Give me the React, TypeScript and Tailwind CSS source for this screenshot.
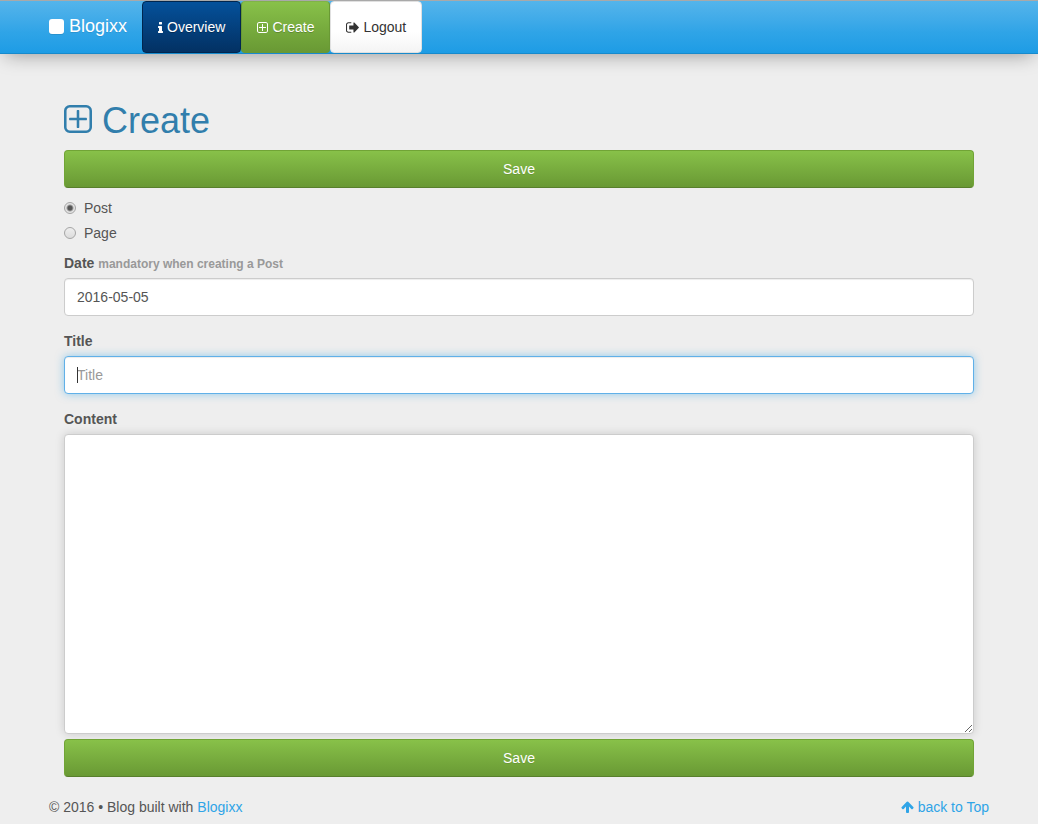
import { useState } from "react"
import type { ReactNode } from "react"
import { clsx } from "clsx"

type IconName = "info" | "plus" | "signout" | "arrowUp"

const ICONS: Record<IconName, { viewBox: string; d: string }> = {
  info: {
    viewBox: "576 128 640 1408",
    d: "M1216 1344v128q0 26-19 45t-45 19h-512q-26 0-45-19t-19-45v-128q0-26 19-45t45-19h64v-384h-64q-26 0-45-19t-19-45v-128q0-26 19-45t45-19h384q26 0 45 19t19 45v576h64q26 0 45 19t19 45zm-128-1152v192q0 26-19 45t-45 19h-256q-26 0-45-19t-19-45v-192q0-26 19-45t45-19h256q26 0 45 19t19 45z",
  },
  plus: {
    viewBox: "192 128 1408 1408",
    d: "M1344 800v64q0 14-9 23t-23 9h-352v352q0 14-9 23t-23 9h-64q-14 0-23-9t-9-23v-352h-352q-14 0-23-9t-9-23v-64q0-14 9-23t23-9h352v-352q0-14 9-23t23-9h64q14 0 23 9t9 23v352h352q14 0 23 9t9 23zm128 448v-832q0-66-47-113t-113-47h-832q-66 0-113 47t-47 113v832q0 66 47 113t113 47h832q66 0 113-47t47-113zm128-832v832q0 119-84.5 203.5t-203.5 84.5h-832q-119 0-203.5-84.5t-84.5-203.5v-832q0-119 84.5-203.5t203.5-84.5h832q119 0 203.5 84.5t84.5 203.5z",
  },
  signout: {
    viewBox: "64 256 1568 1280",
    d: "M704 1440q0 4 1 20t.5 26.5-3 23.5-10 19.5-20.5 6.5h-320q-119 0-203.5-84.5t-84.5-203.5v-704q0-119 84.5-203.5t203.5-84.5h320q13 0 22.5 9.5t9.5 22.5q0 4 1 20t.5 26.5-3 23.5-10 19.5-20.5 6.5h-320q-66 0-113 47t-47 113v704q0 66 47 113t113 47h312l11.5 1 11.5 3 8 5.5 7 9 2 13.5zm928-544q0 26-19 45l-544 544q-19 19-45 19t-45-19-19-45v-288h-448q-26 0-45-19t-19-45v-384q0-26 19-45t45-19h448v-288q0-26 19-45t45-19 45 19l544 544q19 19 19 45z",
  },
  arrowUp: {
    viewBox: "117 128 1558 1536",
    d: "M1675 971q0 51-37 90l-75 75q-38 38-91 38-54 0-90-38l-294-293v704q0 52-37.5 84.5t-90.5 32.5h-128q-53 0-90.5-32.5t-37.5-84.5v-704l-294 293q-36 38-90 38t-90-38l-75-75q-38-38-38-90 0-53 38-91l651-651q35-37 90-37 54 0 91 37l651 651q37 39 37 91z",
  },
}

function Icon({ name, className }: { name: IconName; className: string }) {
  const icon = ICONS[name]
  return (
    <svg viewBox={icon.viewBox} fill="currentColor" aria-hidden="true" className={clsx("shrink-0", className)}>
      <path d={icon.d} />
    </svg>
  )
}

const NAV_ITEMS: Array<{ icon: IconName; iconClass: string; label: string; className: string }> = [
  {
    icon: "info",
    iconClass: "w-[5px] h-[11px]",
    label: "Overview",
    className: "border-[#00264f] bg-linear-to-b from-[#04519b] to-[#033163] text-white [text-shadow:0_1px_0_rgba(0,0,0,0.3)]",
  },
  {
    icon: "plus",
    iconClass: "w-[11px] h-[11px]",
    label: "Create",
    className: "border-[#699934] border-t-[#80b348] bg-linear-to-b from-[#88c149] to-[#699934] text-white [text-shadow:0_1px_0_rgba(0,0,0,0.2)]",
  },
  {
    icon: "signout",
    iconClass: "w-[13px] h-[11px]",
    label: "Logout",
    className: "border-[#e0e0e0] bg-linear-to-b from-white from-60% to-[#f4f4f4] text-[#333333]",
  },
]

const FIELD = "block w-full rounded border bg-white px-3 text-[#555555] outline-none placeholder:text-[#999999]"

function SaveButton() {
  return (
    <button
      type="submit"
      className="h-[38px] w-full cursor-pointer rounded border border-[#71a436] border-b-[#587f2c] bg-linear-to-b from-[#88c149] to-[#699934] text-white [text-shadow:0_1px_0_rgba(0,0,0,0.1)]"
    >
      Save
    </button>
  )
}

function Label({ htmlFor, children }: { htmlFor: string; children: ReactNode }) {
  return (
    <label htmlFor={htmlFor} className="mb-[5px] block font-bold">
      {children}
    </label>
  )
}

export default function App() {
  const [kind, setKind] = useState("Post")
  const [date, setDate] = useState("2016-05-05")
  const [title, setTitle] = useState("")
  const [content, setContent] = useState("")

  return (
    <div id="top" className="min-h-screen bg-[#eeeeee] font-['Liberation_Sans',Arial,sans-serif] text-sm leading-5 text-[#555555]">
      {/* Navbar */}
      <header className="border-t border-b border-t-[#a9a9a9] border-b-[#178acc] bg-linear-to-b from-[#54b4eb] via-[#2fa4e7] via-60% to-[#1d9ce5] shadow-[0_5px_20px_-5px_rgba(0,0,0,0.4)]">
        <nav className="mx-auto flex max-w-[970px] px-[15px]">
          <a href="#top" className="flex items-center gap-[5px] pr-[15px] pb-[2px] text-lg text-white [text-shadow:0_1px_0_rgba(0,0,0,0.1)]">
            <span className="size-[15px] rounded-[3px] bg-white shadow-[0_1px_0_rgba(0,0,0,0.1)]" />
            Blogixx
          </a>
          {NAV_ITEMS.map((item) => (
            <a
              key={item.label}
              href={`#${item.label.toLowerCase()}`}
              className={clsx("flex h-[52px] items-center gap-1 rounded border px-[15px]", item.className)}
            >
              <Icon name={item.icon} className={item.iconClass} />
              {item.label}
            </a>
          ))}
        </nav>
      </header>

      <div className="mx-auto max-w-[970px] px-[15px]">
        <main className="px-[15px] pt-[47px]">
          <h1 className="mb-[9px] flex items-center gap-[10px] text-4xl leading-10 text-[#317eac]">
            <Icon name="plus" className="mb-[5px] size-7" />
            Create
          </h1>

          <form onSubmit={(e) => e.preventDefault()}>
            <SaveButton />

            <div className="mt-[10px] mb-[10px] flex flex-col items-start gap-[5px]">
              {["Post", "Page"].map((option) => (
                <label key={option} className="flex items-center gap-2">
                  <input
                    type="radio"
                    name="kind"
                    value={option}
                    checked={kind === option}
                    onChange={() => setKind(option)}
                    className="size-3 appearance-none rounded-full border border-[#a5a5a5] bg-linear-to-b from-[#eeeeee] to-[#dcdcdc] checked:bg-[radial-gradient(circle,#555555_0_2px,#e4e4e4_4px)]"
                  />
                  {option}
                </label>
              ))}
            </div>

            <Label htmlFor="date">
              Date <small className="text-xs leading-none text-[#999999]">mandatory when creating a Post</small>
            </Label>
            <input
              id="date"
              type="text"
              value={date}
              onChange={(e) => setDate(e.target.value)}
              className={clsx(FIELD, "mb-[15px] h-[38px] border-[#cccccc] shadow-[inset_0_1px_1px_rgba(0,0,0,0.075)]")}
            />

            <Label htmlFor="title">Title</Label>
            <div className="relative mb-[15px]">
              <input
                id="title"
                type="text"
                placeholder="Title"
                value={title}
                onChange={(e) => setTitle(e.target.value)}
                className={clsx(FIELD, "h-[38px] border-[#60b0e8] shadow-[inset_0_1px_1px_rgba(0,0,0,0.075),0_0_8px_rgba(47,164,231,0.5)]")}
              />
              {title === "" && <span className="pointer-events-none absolute top-[11px] left-[13px] h-4 w-px bg-[#333333]" />}
            </div>

            <Label htmlFor="content">Content</Label>
            <textarea
              id="content"
              value={content}
              onChange={(e) => setContent(e.target.value)}
              className={clsx(FIELD, "mb-[5px] h-[300px] resize py-2 border-[#cccccc] shadow-[0_0_10px_rgba(0,0,0,0.15)]")}
            />
            <SaveButton />
          </form>
        </main>

        <footer className="flex justify-between pt-5 pb-[7px]">
          <p>
            © 2016 • Blog built with <a href="#blogixx" className="text-[#2fa4e7]">Blogixx</a>
          </p>
          <a href="#top" className="flex items-center gap-1 text-[#2fa4e7]">
            <Icon name="arrowUp" className="h-3 w-[13px]" />
            back to Top
          </a>
        </footer>
      </div>
    </div>
  )
}
